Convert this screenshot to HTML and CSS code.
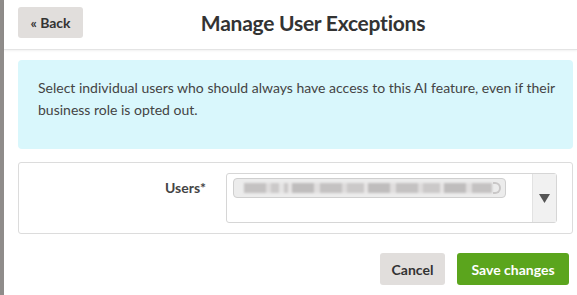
FILE: index.html
```html
<!DOCTYPE html>
<html>
<head>
<meta charset="utf-8">
<link rel="stylesheet" href="styles.css">
</head>
<body>
<div class="backdrop"></div>
<div class="modal">
  <header class="modal-header">
    <button class="btn btn-back">« Back</button>
    <h1 class="title">Manage User Exceptions</h1>
  </header>
  <div class="modal-body">
    <div class="info">Select individual users who should always have access to this AI feature, even if their business role is opted out.</div>
    <div class="panel">
      <label class="field-label">Users*</label>
      <div class="select">
        <div class="select-values">
          <span class="tag"><span class="blur"></span><span class="tag-x"></span></span>
        </div>
        <div class="select-arrow"><svg width="11" height="9" viewBox="0 0 11 9"><path d="M0 0H11L5.5 9Z" fill="#555"/></svg></div>
      </div>
    </div>
  </div>
  <footer class="modal-footer">
    <button class="btn btn-cancel">Cancel</button>
    <button class="btn btn-save">Save changes</button>
  </footer>
</div>
</body>
</html>
```

FILE: styles.css
```css
* { box-sizing: border-box; }
html, body { margin: 0; height: 100%; }
body {
  display: flex;
  background: #8f8c8a;
  font-family: Lato, "Open Sans", sans-serif;
  color: #444;
  overflow: hidden;
}
.backdrop { width: 4px; flex: none; }
.modal {
  flex: 1;
  background: #fff;
  display: flex;
  flex-direction: column;
}
.modal-header {
  height: 50px;
  display: flex;
  align-items: center;
  padding: 0 14px;
  border-bottom: 1px solid #e4e4e4;
  box-shadow: 0 1px 2px rgba(0,0,0,0.06);
}
.btn {
  font-family: inherit;
  border: none;
  border-radius: 3px;
  font-weight: 700;
  font-size: 14px;
  cursor: pointer;
}
.btn-back {
  background: #e1dedc;
  color: #333;
  height: 31px;
  width: 65px;
  margin-top: -4px;
  padding: 0;
}
.title {
  flex: 1;
  text-align: center;
  margin: -4px 0 0 0;
  padding-right: 20px;
  font-size: 21px;
  letter-spacing: -0.25px;
  font-weight: 700;
  color: #333;
}
.modal-body {
  padding: 10px 4px 0 14px;
}
.info {
  background: #d9f7fc;
  border-radius: 4px;
  padding: 17px 6px 28px 20px;
  font-size: 14px;
  line-height: 22px;
  color: #444;
  height: 89px;
}
.panel {
  margin-top: 13px;
  border: 1px solid #dcdcdc;
  border-radius: 3px;
  height: 72px;
  display: flex;
  align-items: flex-start;
  padding-top: 10px;
}
.field-label {
  width: 187px;
  text-align: right;
  font-weight: 700;
  font-size: 14px;
  color: #444;
  padding-top: 6px;
  flex: none;
}
.select {
  margin-left: 20px;
  width: 331px;
  height: 50px;
  border: 1px solid #d6d6d6;
  border-radius: 3px;
  display: flex;
}
.select-values { flex: 1; padding: 4px 6px; }
.tag {
  display: flex;
  align-items: center;
  height: 20px;
  width: 273px;
  border: 1px solid #cfcfcf;
  border-radius: 4px;
  background: #ececec;
  padding: 0 4px 0 10px;
}
.blur {
  flex: 1;
  height: 10px;
  background:
    linear-gradient(90deg, transparent 0 14%, rgba(255,255,255,0.5) 14% 16%, transparent 16% 100%),
    repeating-linear-gradient(90deg, #c4c2c2 0 22px, #dedcdc 22px 27px, #cbc9c9 27px 44px, #e6e4e4 44px 48px, #bfbdbd 48px 70px, #e0dede 70px 76px);
  filter: blur(0.8px);
}
.tag-x {
  width: 8px;
  height: 12px;
  border: 2px solid #c9c7c7;
  border-left: none;
  border-radius: 0 6px 6px 0;
  margin-left: 1px;
  filter: blur(0.5px);
}
.select-arrow {
  width: 24px;
  border-left: 1px solid #e2e2e2;
  background: #f1f1f1;
  display: flex;
  align-items: center;
  justify-content: center;
}
.modal-footer {
  display: flex;
  justify-content: flex-end;
  gap: 12px;
  padding: 19px 8px 0 0;
}
.btn-cancel {
  background: #e1dedc;
  color: #333;
  height: 32px;
  width: 65px;
}
.btn-save {
  background: #5ba51d;
  color: #fff;
  height: 32px;
  width: 112px;
}
```
